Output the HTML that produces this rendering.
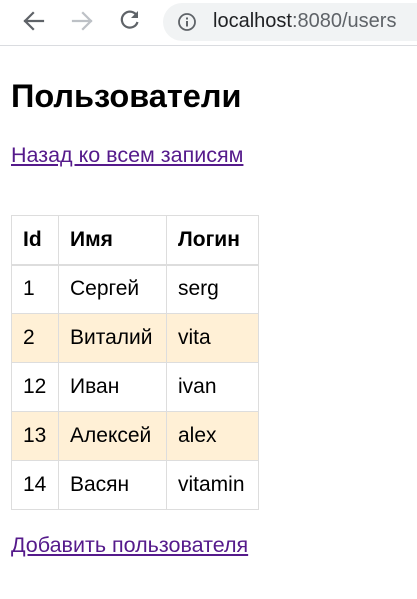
<!DOCTYPE html>
<html><head><meta charset="utf-8"><style>
*{box-sizing:border-box}
body{margin:0;width:417px;height:599px;background:#fff;font-family:"Liberation Sans",Arial,sans-serif;overflow:hidden;position:relative}
.bar{position:absolute;left:0;top:0;width:417px;height:46px;background:#fff;border-bottom:1px solid #dadce0}
.pill{position:absolute;left:163px;top:3px;width:280px;height:38px;border-radius:19px;background:#f1f3f4}
.url{position:absolute;left:213px;top:10px;font-size:20px;color:#202124}
.url span{color:#5f6368}
h1{position:absolute;left:11px;top:78px;margin:0;font-size:32.5px;font-weight:bold;color:#000}
a{color:#551a8b;text-decoration:underline;font-size:21.5px;position:absolute;left:11px}
table{position:absolute;left:11px;top:215px;border-collapse:collapse;font-size:21px;table-layout:fixed;width:247px}
td,th{border:1px solid #ddd;height:49px;padding:0 11px;text-align:left;color:#000}
th{border-bottom:2px solid #ddd}
tr.o td{background:#fff0d6}
</style></head><body>
<div class="bar">
<svg width="417" height="46" style="position:absolute;left:0;top:0">
<g fill="none" stroke-width="2.2" stroke-linecap="square">
<path d="M43 21H25M33 13l-8 8 8 8" stroke="#5f6368"/>
<path d="M73 21h18M83 13l8 8-8 8" stroke="#bdc1c6"/>
<path d="M136 14.5A8 8 0 1 0 137.5 22" stroke="#5f6368" stroke-linecap="butt"/>
</g>
<path d="M138 11v7h-7z" fill="#5f6368"/>
</svg>
<div class="pill"></div>
<svg width="20" height="20" style="position:absolute;left:177px;top:12px"><circle cx="10" cy="10" r="8" fill="none" stroke="#5f6368" stroke-width="1.8"/><rect x="9" y="9" width="2" height="5.5" fill="#5f6368"/><rect x="9" y="5.5" width="2" height="2" fill="#5f6368"/></svg>
<div class="url">localhost<span>:8080/users</span></div>
</div>
<h1>Пользователи</h1>
<a style="top:143px">Назад ко всем записям</a>
<table>
<colgroup><col style="width:47px"><col style="width:108px"><col style="width:92px"></colgroup>
<tr><th>Id</th><th>Имя</th><th>Логин</th></tr>
<tr><td>1</td><td>Сергей</td><td>serg</td></tr>
<tr class="o"><td>2</td><td>Виталий</td><td>vita</td></tr>
<tr><td>12</td><td>Иван</td><td>ivan</td></tr>
<tr class="o"><td>13</td><td>Алексей</td><td>alex</td></tr>
<tr><td>14</td><td>Васян</td><td>vitamin</td></tr>
</table>
<a style="top:533px">Добавить пользователя</a>
</body></html>
